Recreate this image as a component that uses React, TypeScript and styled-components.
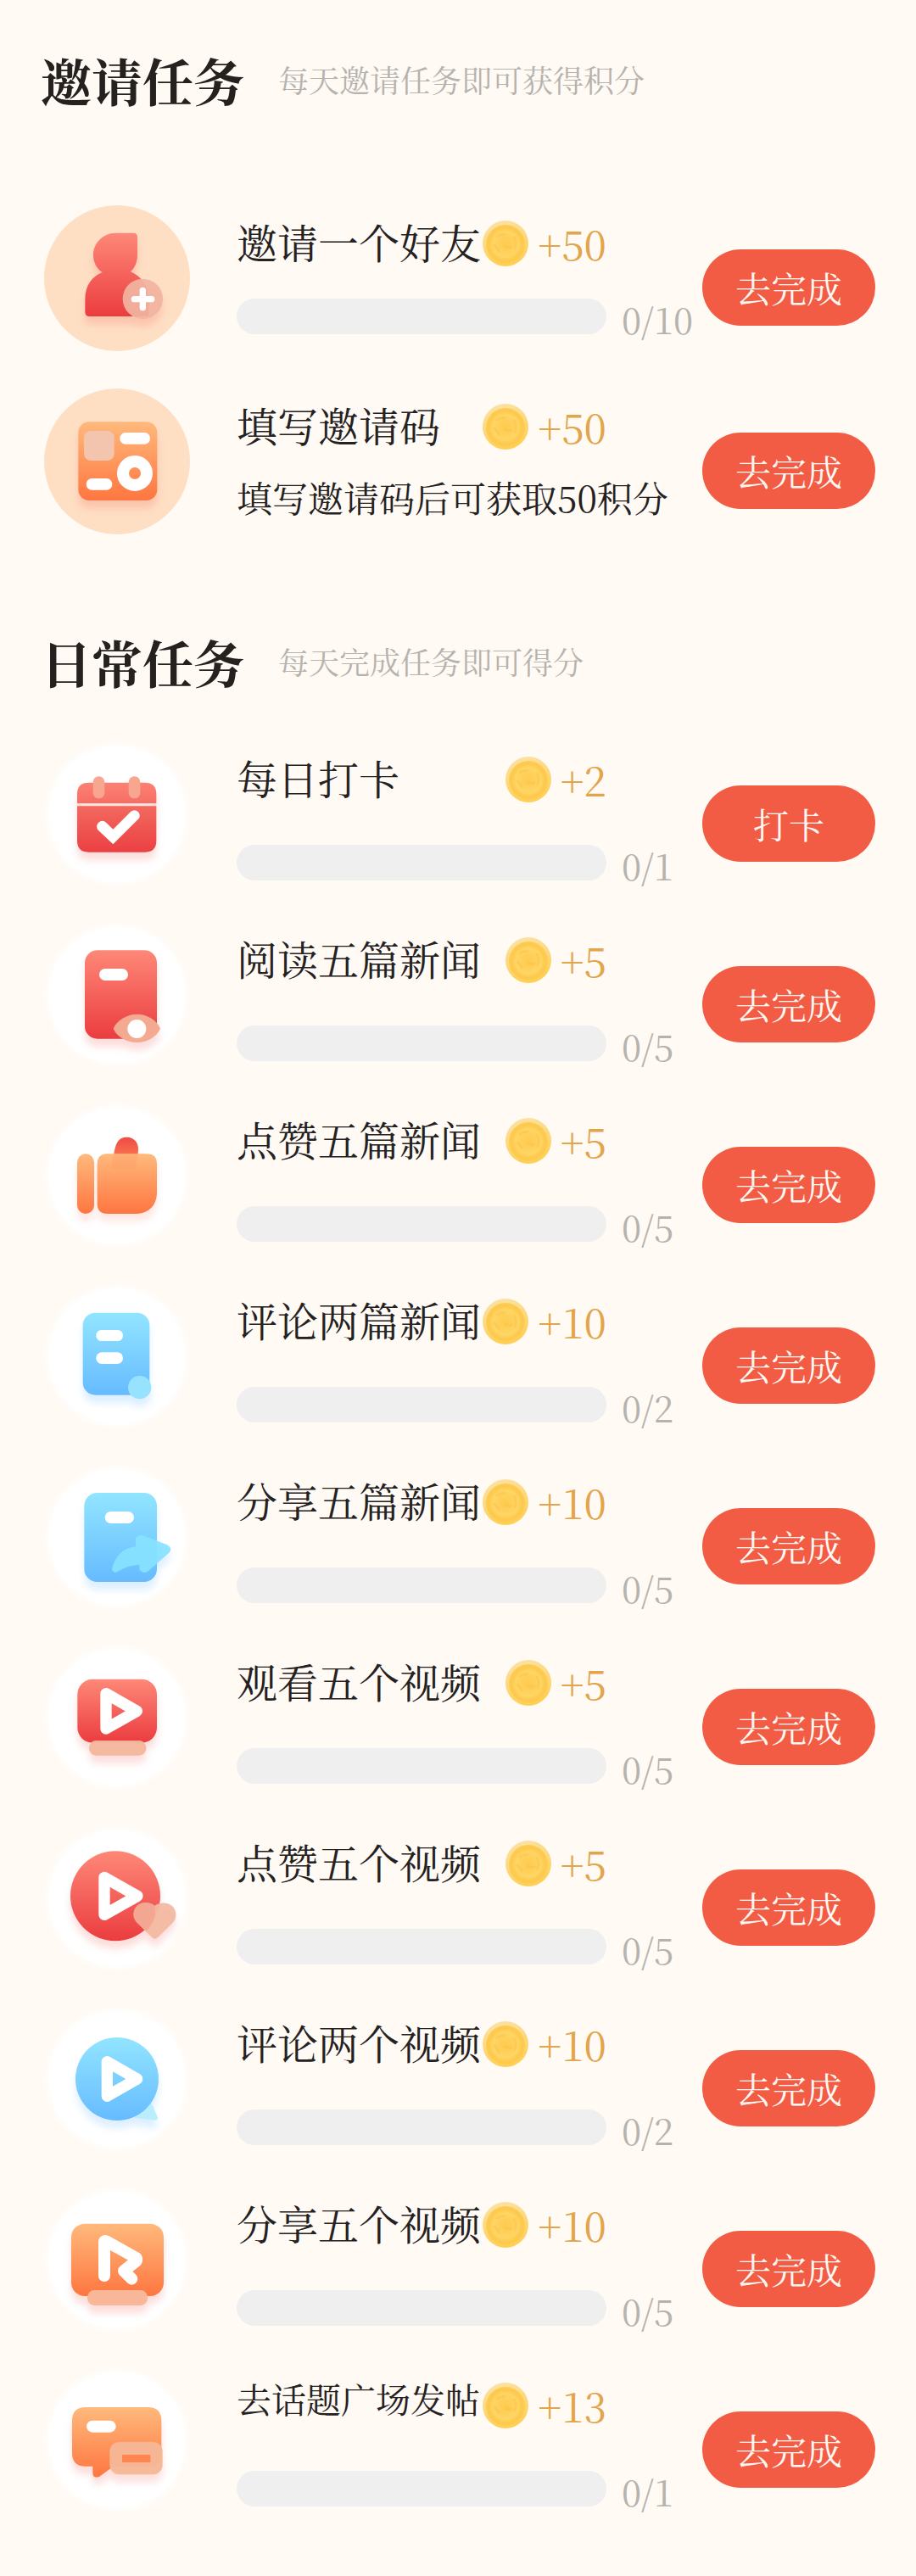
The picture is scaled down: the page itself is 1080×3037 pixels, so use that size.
import React from "react";
import styled, { createGlobalStyle } from "styled-components";

const color = {
  page: "#fffaf4",
  ink: "#24211f",
  muted: "#b6b2ad",
  gold: "#e2a54c",
  track: "#efefef",
  action: "#f25c44",
  peach: "#fedfc4",
};

const GlobalStyle = createGlobalStyle`
  * { box-sizing: border-box; }
  body {
    margin: 0;
    background: ${color.page};
    color: ${color.ink};
    font-family: "Noto Serif CJK SC", "Noto Serif SC", "Source Han Serif SC", "Liberation Serif", "Noto Sans CJK SC", serif;
  }
`;

const Page = styled.main`
  min-height: 100vh;
  padding: 56px 48px 74px;
`;

const Section = styled.section`
  & + & {
    margin-top: 112px;
  }
`;

const SectionHeader = styled.header<{ $space: number }>`
  display: flex;
  align-items: center;
  gap: 40px;
  height: 76px;
  margin-bottom: ${(p) => p.$space}px;
`;

const SectionTitle = styled.h2`
  margin: 0;
  font-size: 60px;
  line-height: 76px;
  font-weight: 700;
  white-space: nowrap;
`;

const SectionHint = styled.p`
  margin: 0;
  font-size: 36px;
  line-height: 48px;
  color: ${color.muted};
`;

const TaskList = styled.ul<{ $gap: number }>`
  display: grid;
  gap: ${(p) => p.$gap}px;
  margin: 0;
  padding: 0 0 0 4px;
  list-style: none;
`;

const TaskRow = styled.li`
  display: grid;
  grid-template-columns: 172px minmax(0, 1fr) 204px;
  align-items: start;
`;

const Badge = styled.div<{ $tone: "peach" | "white" }>`
  width: 172px;
  height: 172px;
  border-radius: 50%;
  background: ${(p) =>
    p.$tone === "peach" ? color.peach : `radial-gradient(closest-side, #fff 92%, ${color.page} 100%)`};
`;

const BadgeArt = styled.svg<{ $shadow: string }>`
  display: block;
  width: 172px;
  height: 172px;

  & > g {
    filter: drop-shadow(0 28px 12px ${(p) => p.$shadow});
  }
`;

const TaskBody = styled.div`
  display: grid;
  grid-template-columns: minmax(0, 1fr) 113px;
  padding: 15px 0 0 55px;
`;

const TaskTop = styled.div`
  display: flex;
  justify-content: space-between;
  height: 60px;
`;

const TaskName = styled.h3<{ $compact?: boolean }>`
  flex: none;
  margin: 0;
  font-size: ${(p) => (p.$compact ? 41 : 48)}px;
  line-height: ${(p) => (p.$compact ? 44 : 56)}px;
  font-weight: 400;
  white-space: nowrap;
`;

const Reward = styled.span`
  display: flex;
  flex: none;
  align-items: center;
  gap: 11px;
  font-size: 48px;
  line-height: 60px;
  color: ${color.gold};
`;

const CoinArt = styled.svg`
  display: block;
  width: 54px;
  height: 54px;
`;

const ProgressLine = styled.div<{ $space: number }>`
  grid-column: 1 / -1;
  display: grid;
  grid-template-columns: minmax(0, 1fr) 113px;
  margin-top: ${(p) => p.$space}px;
`;

const Track = styled.progress`
  appearance: none;
  display: block;
  width: 100%;
  height: 42px;
  border: 0;
  border-radius: 21px;
  overflow: hidden;
  background: ${color.track};

  &::-webkit-progress-bar {
    background: ${color.track};
  }
  &::-webkit-progress-value {
    background: ${color.action};
  }
`;

const Count = styled.span`
  padding: 3px 0 0 18px;
  font-size: 42px;
  line-height: 42px;
  color: ${color.muted};
  white-space: nowrap;
`;

const Note = styled.p`
  grid-column: 1 / -1;
  margin: 25px 0 0;
  font-size: 42px;
  line-height: 56px;
  white-space: nowrap;
`;

const Action = styled.button`
  height: 90px;
  margin-top: 52px;
  padding: 0;
  border: 0;
  border-radius: 45px;
  background: ${color.action};
  color: #fff8f2;
  font: inherit;
  font-size: 42px;
  line-height: 90px;
  cursor: pointer;
`;

const Palette = styled.svg`
  display: block;
  width: 0;
  height: 0;
`;

function Gradients() {
  const stops: [string, string, string][] = [
    ["red", "#fe8878", "#eb3c3f"],
    ["redDeep", "#f2695f", "#ec4043"],
    ["redTop", "#fb8173", "#f66e66"],
    ["orange", "#ffb97c", "#fe7640"],
    ["blue", "#92e5ff", "#66bbff"],
    ["thumb", "#f04a43", "#f87450"],
  ];
  return (
    <Palette aria-hidden="true">
      <defs>
        {stops.map(([id, from, to]) => (
          <linearGradient key={id} id={id} x1="0" y1="0" x2="0" y2="1">
            <stop offset="0" stopColor={from} />
            <stop offset="1" stopColor={to} />
          </linearGradient>
        ))}
        <radialGradient id="coin" cx="0.5" cy="0.5" r="0.5">
          <stop offset="0" stopColor="#fdcb4e" />
          <stop offset="0.65" stopColor="#ffd564" />
          <stop offset="0.85" stopColor="#fdc94c" />
          <stop offset="1" stopColor="#fdcc55" />
        </radialGradient>
        <linearGradient id="coinRim" x1="0" y1="0" x2="0.3" y2="1">
          <stop offset="0" stopColor="#fbe3ac" />
          <stop offset="1" stopColor="#fed056" />
        </linearGradient>
      </defs>
    </Palette>
  );
}

function Coin() {
  return (
    <CoinArt viewBox="0 0 54 54" aria-hidden="true">
      <circle cx="27" cy="27" r="27" fill="url(#coinRim)" />
      <circle cx="27" cy="28" r="23" fill="url(#coin)" />
      <path
        d="M17 19c4-4 7-1 9-3M14 29c3 4 4 3 5 7M27 31c3-2 3 3 7 0M37 20c3 4 3 8 1 13"
        fill="none"
        stroke="#f7bb3c"
        strokeWidth="3"
        strokeLinecap="round"
        opacity="0.3"
      />
    </CoinArt>
  );
}

type Art = { top: number; shadow: string; peach?: boolean; drawing: React.ReactNode };

const warm = "rgba(240, 90, 80, 0.2)";
const cool = "rgba(100, 180, 255, 0.22)";

const Play = ({ x, y, w, h }: { x: number; y: number; w: number; h: number }) => (
  <path
    d={`M${x} ${y - h}V${y + h}L${x + w} ${y}Z`}
    fill="none"
    stroke="#fff"
    strokeWidth="40"
    strokeLinejoin="round"
  />
);

const art: Record<string, Art> = {
  friend: {
    top: 66,
    shadow: warm,
    peach: true,
    drawing: (
      <>
        <path
          d="M318 164H382Q396 164 396 178V242C396 266 387 287 372 301C408 317 436 350 436 398V459H227Q211 459 211 443V398C211 350 236 317 272 303C252 289 240 268 240 242C240 199 275 164 318 164Z"
          fill="url(#red)"
        />
        <circle cx="415" cy="397" r="71" fill="#f1b5a0" fillOpacity="0.93" />
        <path d="M415 367V428M385 398H446" stroke="#fff" strokeWidth="22" strokeLinecap="round" />
      </>
    ),
  },
  code: {
    top: 714,
    shadow: warm,
    peach: true,
    drawing: (
      <>
        <rect x="187" y="832" width="279" height="278" rx="38" fill="url(#orange)" />
        <rect x="207" y="864" width="107" height="105" rx="24" fill="#f3c4ae" />
        <rect x="334" y="870" width="107" height="41" rx="20" fill="#fff" />
        <rect x="215" y="1032" width="92" height="41" rx="20" fill="#fff" />
        <circle cx="387" cy="1014" r="42" fill="none" stroke="#fff" strokeWidth="42" />
      </>
    ),
  },
  calendar: {
    top: 42,
    shadow: warm,
    drawing: (
      <>
        <path d="M183 262V228Q183 188 223 188H423Q463 188 463 228V262Z" fill="url(#redTop)" />
        <path d="M183 262H463V271H183Z" fill="#fbe3dc" />
        <path d="M183 271H463V394Q463 434 423 434H223Q183 434 183 394Z" fill="url(#redDeep)" />
        <rect x="239" y="166" width="41" height="78" rx="20" fill="#f8a68f" />
        <rect x="365" y="166" width="41" height="78" rx="20" fill="#f8a68f" />
        <path
          d="M258 330Q272 316 286 330L310 353L373 290Q387 280 399 292Q410 305 399 317L310 406L258 357Q246 343 258 330Z"
          fill="#fff"
        />
      </>
    ),
  },
  read: {
    top: 681,
    shadow: warm,
    drawing: (
      <>
        <rect x="210" y="781" width="255" height="313" rx="44" fill="url(#red)" />
        <rect x="261" y="846" width="102" height="42" rx="21" fill="#fff" />
        <path
          d="M311 1058C322 1030 358 1007 395 1007S466 1030 477 1058C466 1084 432 1107 395 1107S322 1086 311 1058Z"
          fill="#f4aa91"
        />
        <circle cx="394" cy="1059" r="33" fill="#fff" />
      </>
    ),
  },
  like: {
    top: 60,
    shadow: "rgba(255, 110, 90, 0.16)",
    drawing: (
      <>
        <path d="M312 250C316 206 328 182 358 182C386 182 400 204 399 226L397 250Z" fill="url(#thumb)" />
        <rect x="183" y="241" width="60" height="212" rx="30" fill="url(#orange)" />
        <path
          d="M290 241H429Q465 241 465 277V383Q460 445 396 453H290Q254 453 254 417V277Q254 241 290 241Z"
          fill="url(#orange)"
        />
        <path d="M311 242H398L388 292H303Z" fill="#ff8a58" opacity="0.2" />
      </>
    ),
  },
  comment: {
    top: 699,
    shadow: cool,
    drawing: (
      <>
        <rect x="203" y="803" width="236" height="291" rx="44" fill="url(#blue)" />
        <rect x="250" y="864" width="95" height="39" rx="19" fill="#fff" />
        <rect x="250" y="943" width="95" height="41" rx="20" fill="#fff" />
        <circle cx="404" cy="1067" r="41" fill="#97e3ff" />
      </>
    ),
  },
  share: {
    top: 78,
    shadow: cool,
    drawing: (
      <>
        <rect x="208" y="180" width="257" height="315" rx="46" fill="url(#blue)" />
        <rect x="281" y="246" width="103" height="42" rx="21" fill="#fff" />
        <path
          d="M390 342Q396 326 416 331L501 364Q522 375 508 392L436 455Q422 468 408 457Q400 450 404 434Q362 435 324 460Q308 465 306 448C318 405 344 374 390 370Z"
          fill="#87e2ff"
          fillOpacity="0.93"
        />
      </>
    ),
  },
  watch: {
    top: 717,
    shadow: warm,
    drawing: (
      <>
        <rect x="184" y="839" width="281" height="225" rx="54" fill="url(#red)" />
        <Play x={285} y={952} w={109} h={62} />
        <rect x="225" y="1056" width="202" height="53" rx="25" fill="#f4b79d" fillOpacity="0.95" />
      </>
    ),
  },
  likeVideo: {
    top: 96,
    shadow: warm,
    drawing: (
      <>
        <circle cx="318" cy="346" r="159" fill="url(#red)" />
        <Play x={279} y={346} w={117} h={66} />
        <path
          d="M457 380C436 363 404 366 390 386C377 406 381 428 396 442L448 493Q458 502 468 493L520 442C536 425 536 402 522 384C505 366 476 367 457 380Z"
          fill="#f3b9a2"
          fillOpacity="0.95"
        />
        <path d="M457 380C436 363 404 366 390 386C377 406 381 428 396 442L427 472Q466 430 457 380Z" fill="#f19f8c" opacity="0.6" />
      </>
    ),
  },
  commentVideo: {
    top: 735,
    shadow: cool,
    drawing: (
      <>
        <path d="M446 1078L468 1130Q468 1139 458 1139L385 1130Z" fill="#b9eeff" />
        <circle cx="324" cy="993" r="147" fill="url(#blue)" />
        <Play x={289} y={993} w={106} h={61} />
      </>
    ),
  },
  shareVideo: {
    top: 114,
    shadow: warm,
    drawing: (
      <>
        <rect x="162" y="245" width="327" height="256" rx="48" fill="url(#orange)" />
        <path
          d="M279 429V308Q280 305 286 307L392 366Q395 371 391 378L348 412L376 440"
          fill="none"
          stroke="#fff"
          strokeWidth="42"
          strokeLinecap="round"
          strokeLinejoin="round"
        />
        <rect x="219" y="480" width="213" height="54" rx="25" fill="#f7b798" />
      </>
    ),
  },
  post: {
    top: 753,
    shadow: warm,
    drawing: (
      <>
        <path
          d="M213 894H433Q481 894 481 942V1056Q481 1104 433 1104H310L262 1139Q240 1148 238 1128V1103H213Q165 1103 165 1056V942Q165 894 213 894Z"
          fill="url(#orange)"
        />
        <rect x="216" y="941" width="104" height="42" rx="21" fill="#fff" />
        <rect x="298" y="1017" width="187" height="115" rx="34" fill="#f6b797" fillOpacity="0.95" />
        <rect x="342" y="1062" width="100" height="27" fill="#ff8650" />
      </>
    ),
  },
};

type Task = {
  icon: keyof typeof art;
  name: string;
  reward: number;
  goal?: number;
  note?: string;
  action?: string;
  compact?: boolean;
};

const inviteTasks: Task[] = [
  { icon: "friend", name: "邀请一个好友", reward: 50, goal: 10 },
  { icon: "code", name: "填写邀请码", reward: 50, note: "填写邀请码后可获取50积分" },
];

const dailyTasks: Task[] = [
  { icon: "calendar", name: "每日打卡", reward: 2, goal: 1, action: "打卡" },
  { icon: "read", name: "阅读五篇新闻", reward: 5, goal: 5 },
  { icon: "like", name: "点赞五篇新闻", reward: 5, goal: 5 },
  { icon: "comment", name: "评论两篇新闻", reward: 10, goal: 2 },
  { icon: "share", name: "分享五篇新闻", reward: 10, goal: 5 },
  { icon: "watch", name: "观看五个视频", reward: 5, goal: 5 },
  { icon: "likeVideo", name: "点赞五个视频", reward: 5, goal: 5 },
  { icon: "commentVideo", name: "评论两个视频", reward: 10, goal: 2 },
  { icon: "shareVideo", name: "分享五个视频", reward: 10, goal: 5 },
  { icon: "post", name: "去话题广场发帖", reward: 13, goal: 1, compact: true },
];

function TaskItem({ task, space }: { task: Task; space: number }) {
  const { top, shadow, peach, drawing } = art[task.icon];
  return (
    <TaskRow>
      <Badge $tone={peach ? "peach" : "white"}>
        <BadgeArt viewBox={`66 ${top} 516 516`} $shadow={shadow} aria-hidden="true">
          <g>{drawing}</g>
        </BadgeArt>
      </Badge>
      <TaskBody>
        <TaskTop>
          <TaskName $compact={task.compact}>{task.name}</TaskName>
          <Reward>
            <Coin />
            <span>+{task.reward}</span>
          </Reward>
        </TaskTop>
        {task.goal !== undefined && (
          <ProgressLine $space={space}>
            <Track value={0} max={task.goal} aria-label={task.name} />
            <Count>0/{task.goal}</Count>
          </ProgressLine>
        )}
        {task.note && <Note>{task.note}</Note>}
      </TaskBody>
      <Action type="button">{task.action ?? "去完成"}</Action>
    </TaskRow>
  );
}

export default function App() {
  return (
    <>
      <GlobalStyle />
      <Gradients />
      <Page>
        <Section>
          <SectionHeader $space={110}>
            <SectionTitle>邀请任务</SectionTitle>
            <SectionHint>每天邀请任务即可获得积分</SectionHint>
          </SectionHeader>
          <TaskList $gap={44}>
            {inviteTasks.map((task) => (
              <TaskItem key={task.name} task={task} space={35} />
            ))}
          </TaskList>
        </Section>
        <Section>
          <SectionHeader $space={56}>
            <SectionTitle>日常任务</SectionTitle>
            <SectionHint>每天完成任务即可得分</SectionHint>
          </SectionHeader>
          <TaskList $gap={41}>
            {dailyTasks.map((task) => (
              <TaskItem key={task.name} task={task} space={47} />
            ))}
          </TaskList>
        </Section>
      </Page>
    </>
  );
}
